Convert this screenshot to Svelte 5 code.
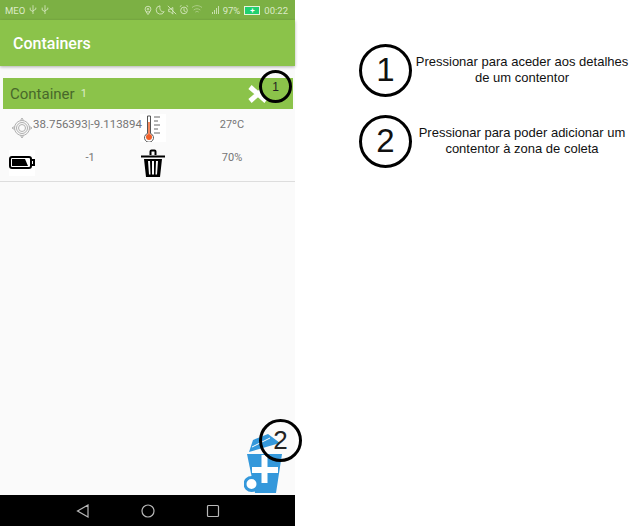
<script lang="ts">
	const notes = [
		{ n: 1, lines: ['Pressionar para aceder aos detalhes', 'de um contentor'] },
		{ n: 2, lines: ['Pressionar para poder adicionar um', 'contentor à zona de coleta'] }
	];
</script>

<div class="page">
	<div class="phone">
		<div class="status">
			<span class="carrier">MEO</span>
			<svg class="usb" viewBox="0 0 10 12"><path d="M5 0v11M1.5 3v3l3.5 2M8.5 3v2l-3.5 2" /></svg>
			<svg class="usb" viewBox="0 0 10 12"><path d="M5 0v11M1.5 3v3l3.5 2M8.5 3v2l-3.5 2" /></svg>
			<span class="spacer"></span>
			<svg class="st-icon" viewBox="0 0 12 12"><circle cx="6" cy="5" r="3.5" /><circle cx="6" cy="5" r="1" /><path d="M3.5 8 6 11.5 8.5 8" /></svg>
			<svg class="st-icon" viewBox="0 0 12 12"><path d="M6 1a5 5 0 1 0 5 7c-3 1-6-2-5-7z" /></svg>
			<svg class="st-icon" viewBox="0 0 12 12"><path d="M1 1l10 10M2 5v3h2l3 3V3L4 5z" /></svg>
			<svg class="st-icon" viewBox="0 0 12 12"><circle cx="6" cy="6.5" r="4" /><path d="M6 4v3l2 1M1 2l2-1.5M11 2 9 .5" /></svg>
			<svg class="st-icon wifi" viewBox="0 0 14 12"><path d="M1 3c4-3 8-3 12 0M3 6c3-2 5-2 8 0M5 8.5c1.5-1 2.5-1 4 0" /></svg>
			<span class="signal"><i></i><i></i><i></i><i></i></span>
			<span class="pct">97%</span>
			<span class="batt">+</span>
			<span class="clock">00:22</span>
		</div>
		<header class="appbar">Containers</header>

		<main class="content">
			<section class="card">
				<div class="card-head">
					<span class="card-title">Container</span>
					<span class="card-num">1</span>
					<svg class="close" viewBox="0 0 22 18"><path d="M3 2l16 14M19 2 3 16" /></svg>
				</div>
				<div class="card-grid">
					<svg class="ic" viewBox="0 0 22 22">
						<circle cx="11" cy="11" r="7.5" />
						<circle cx="11" cy="11" r="5.5" />
						<circle cx="11" cy="11" r="3.5" />
						<path d="M9.5 3.5 11 1l1.5 2.5M9.5 18.5 11 21l1.5-2.5M3.5 9.5 1 11l2.5 1.5M18.5 9.5 21 11l-2.5 1.5" />
					</svg>
					<span class="val coords">38.756393|-9.113894</span>
					<svg class="ic-thermo" viewBox="0 0 26 28">
						<path d="M7.5 2h3v17.5a4.5 4.5 0 1 1-3 0z" />
						<path class="merc" d="M9 8v12" />
						<circle cx="9" cy="23" r="3" />
						<path class="ticks" d="M14 3h6M14 7h4M14 11h6M14 15h4M14 19h6" />
					</svg>
					<span class="val right">27ºC</span>
					<svg class="ic-batt" viewBox="0 0 26 26">
						<rect x="1" y="7" width="21" height="11" rx="2" />
						<path class="fill" d="M3 9h13l3 7H3z" />
						<path class="cap" d="M23 10h2v5h-2" />
					</svg>
					<span class="val lower minus">-1</span>
					<svg class="ic-trash" viewBox="0 0 24 28">
						<path d="M0 6.5h24v2H0zM8.5 6V2.5a2 2 0 0 1 2-2h3a2 2 0 0 1 2 2V6h-2V2.5h-3V6z" />
						<path d="M3 10h18l-2 18H5zM7 12l1 13.5h1.500L9 12zM11 12v13.5h2V12zM15 12l-.5 13.5H16l1-13.5z" fill-rule="evenodd" />
					</svg>
					<span class="val lower right">70%</span>
				</div>
			</section>

			<span class="bubble small">1</span>
			<svg class="fab" viewBox="0 0 38 61">
				<path class="lid" d="M5 18 9 6 24 0l12 9z" />
				<path class="lid-line" d="M8 13 26 4" />
				<path class="bin" d="M3 20h35l-6 39H11z" />
				<path class="plus" d="M17.5 21h6v12H34v6H23.5v10h-6V39H8v-6h9.5z" />
				<circle class="ring" cx="7.5" cy="50" r="6.5" />
			</svg>
			<span class="bubble large">2</span>
		</main>

		<nav class="navbar">
			<svg viewBox="0 0 14 14"><path d="M12 1v12L1.5 7z" /></svg>
			<svg viewBox="0 0 14 14"><circle cx="7" cy="7" r="6" /></svg>
			<svg viewBox="0 0 14 14"><rect x="1.5" y="1.5" width="11" height="11" rx="1" /></svg>
		</nav>
	</div>

	<aside class="notes">
		{#each notes as note}
			<div class="note">
				<span class="num">{note.n}</span>
				<p>{note.lines[0]}<br />{note.lines[1]}</p>
			</div>
		{/each}
	</aside>
</div>

<style>
	:global(body) { margin: 0; background: #fff; }

	.page {
		display: flex;
		width: 636px;
		height: 526px;
		font-family: Roboto, "Liberation Sans", sans-serif;
		overflow: hidden;
	}

	.phone {
		display: flex;
		flex-direction: column;
		width: 295px;
		height: 526px;
		background: #fafafa;
	}

	.status {
		display: flex;
		align-items: center;
		gap: 4px;
		flex: none;
		height: 20px;
		padding: 0 7px 0 5px;
		box-sizing: border-box;
		background: #7cb044;
		color: #dcebc8;
		font-size: 9.5px;
	}
	.spacer { flex: 1; }
	.usb { width: 8px; height: 10px; fill: none; stroke: #dcebc8; stroke-width: 1; }
	.st-icon { width: 10px; height: 10px; margin-right: -2px; fill: none; stroke: #dcebc8; stroke-width: 1; }
	.wifi { width: 12px; margin-right: 5px; opacity: 0.6; }
	.signal { display: flex; align-items: flex-end; gap: 1px; height: 8px; opacity: 0.8; }
	.signal i { width: 1px; background: #dcebc8; }
	.signal i:nth-child(1) { height: 2px; }
	.signal i:nth-child(2) { height: 4px; }
	.signal i:nth-child(3) { height: 6px; }
	.signal i:nth-child(4) { height: 8px; }
	.batt {
		display: block;
		width: 14px;
		height: 7px;
		background: #20d070;
		border: 1px solid #e8f3da;
		color: #fff;
		font-size: 8px;
		line-height: 7px;
		text-align: center;
		font-weight: 700;
	}

	.appbar {
		flex: none;
		height: 46px;
		padding-left: 13px;
		box-sizing: border-box;
		display: flex;
		align-items: center;
		background: #8bc34a;
		color: #fff;
		font-size: 16px;
		font-weight: 500;
		box-shadow: 0 1px 3px rgba(0, 0, 0, 0.3);
	}

	.content { flex: 1; position: relative; padding-top: 12px; }

	.card { border-bottom: 1px solid #ddd; height: 103px; }
	.card-head {
		display: flex;
		align-items: center;
		height: 31px;
		margin: 0 2px 0 3px;
		padding-left: 7px;
		background: #8bc34a;
		color: #48682a;
		font-size: 15px;
	}
	.card-num { margin-left: 6px; font-size: 11px; color: #dcedc8; }
	.close { width: 22px; height: 18px; margin-left: 160px; fill: none; stroke: #fff; stroke-width: 5; }

	.card-grid {
		display: grid;
		grid-template-columns: 22px 108px 26px 129px;
		grid-template-rows: 37px 33px;
		align-items: center;
		justify-items: center;
		padding-left: 10px;
		color: #757575;
		font-size: 11px;
	}
	.val { align-self: start; margin-top: 9px; text-align: center; }
	.lower { margin-top: 5px; }
	.coords { position: relative; margin-top: 8px; font-size: 11.5px; padding-left: 3px; white-space: nowrap; }
	.minus { padding-left: 8px; }
	.right { padding-left: 3px; }
	.ic { width: 22px; height: 22px; margin-left: 2px; fill: none; stroke: #b0b0b0; stroke-width: 1; }
	.ic-thermo { width: 26px; height: 28px; background: #fff; }
	.ic-thermo path { fill: #fff; stroke: #555; stroke-width: 1; }
	.ic-thermo .merc { stroke: #f0602a; stroke-width: 1.5; }
	.ic-thermo circle { fill: #f0602a; }
	.ic-thermo .ticks { stroke: #666; }
	.ic-batt { width: 26px; height: 26px; margin-left: 2px; background: #fff; fill: none; stroke: #000; stroke-width: 2; }
	.ic-batt .fill { fill: #000; stroke: none; }
	.ic-trash { width: 24px; height: 28px; fill: #000; }

	.bubble {
		position: absolute;
		display: flex;
		align-items: center;
		justify-content: center;
		box-sizing: border-box;
		border: 3px solid #000;
		border-radius: 50%;
		color: #222;
		font-family: "Liberation Sans", sans-serif;
	}
	.small {
		left: 259px;
		top: 4px;
		width: 33px;
		height: 33px;
		font-size: 12px;
		background: linear-gradient(#fafafa 5px, #8bc34a 5px);
	}
	.large { left: 259px; top: 353px; width: 43px; height: 43px; font-size: 26px; }

	.fab { position: absolute; left: 244px; top: 368px; width: 38px; height: 61px; }
	.lid, .bin { fill: #3498db; }
	.lid-line { fill: none; stroke: #fff; stroke-width: 1; }
	.plus { fill: #fff; }
	.ring { fill: #fff; stroke: #3498db; stroke-width: 3; }

	.navbar {
		flex: none;
		display: flex;
		justify-content: center;
		align-items: center;
		gap: 51px;
		height: 31px;
		background: #000;
	}
	.navbar svg { width: 14px; height: 14px; fill: none; stroke: #b8b8b8; stroke-width: 1.2; }

	.notes { flex: 1; display: flex; flex-direction: column; gap: 19px; padding: 44px 0 0 64px; }
	.note { display: flex; align-items: center; gap: 3px; height: 52px; }
	.num {
		flex: none;
		display: flex;
		align-items: center;
		justify-content: center;
		box-sizing: border-box;
		width: 53px;
		height: 53px;
		border: 3px solid #000;
		border-radius: 50%;
		font-family: "Liberation Sans", sans-serif;
		font-size: 33px;
		color: #111;
	}
	.note p {
		flex: none;
		margin: 0;
		width: 214px;
		font-family: "Liberation Sans", sans-serif;
		font-size: 13px;
		line-height: 16px;
		text-align: center;
		white-space: nowrap;
		color: #111;
	}
</style>
